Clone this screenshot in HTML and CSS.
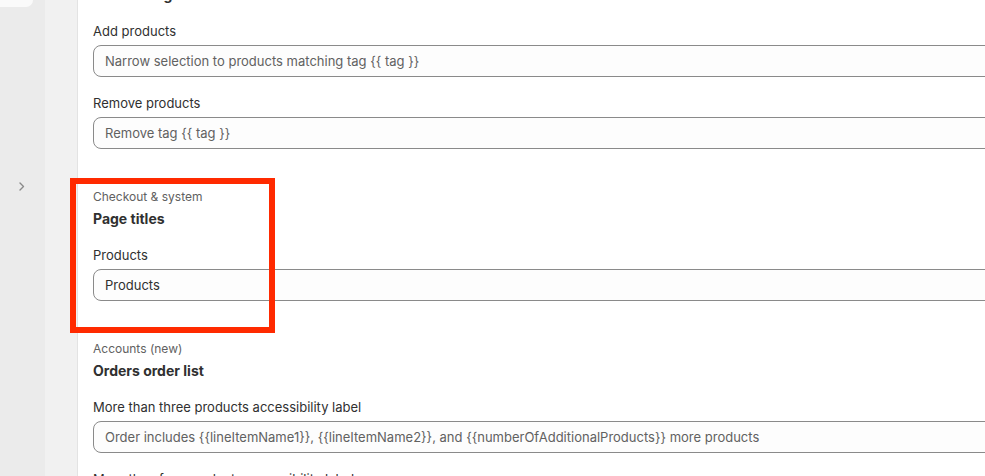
FILE: index.html
```html
<!DOCTYPE html>
<html lang="en">
<head>
<meta charset="utf-8">
<title>Translations</title>
<link rel="stylesheet" href="styles.css">
</head>
<body>
<div class="app">
  <aside class="rail">
    <div class="rail-card"></div>
    <div class="rail-toggle">
      <svg width="6" height="9" viewBox="0 0 6 9" aria-hidden="true"><path d="M1 1l3.5 3.5L1 8" fill="none" stroke="#8a8a8a" stroke-width="1.4" stroke-linecap="round" stroke-linejoin="round"/></svg>
    </div>
  </aside>
  <div class="gutter"></div>
  <main class="content">
    <div class="scroll">
      <section class="section">
        <div class="section-head">
          <h2 class="section-title">Product tags</h2>
        </div>
        <div class="field">
          <label class="field-label">Add products</label>
          <div class="input muted">Narrow selection to products matching tag {{ tag }}</div>
        </div>
        <div class="field">
          <label class="field-label">Remove products</label>
          <div class="input muted">Remove tag {{ tag }}</div>
        </div>
      </section>
      <section class="section">
        <div class="section-head">
          <p class="section-caption">Checkout &amp; system</p>
          <h2 class="section-title">Page titles</h2>
        </div>
        <div class="field">
          <label class="field-label">Products</label>
          <div class="input">Products</div>
        </div>
      </section>
      <section class="section">
        <div class="section-head">
          <p class="section-caption">Accounts (new)</p>
          <h2 class="section-title">Orders order list</h2>
        </div>
        <div class="field">
          <label class="field-label">More than three products accessibility label</label>
          <div class="input muted">Order includes {{lineItemName1}}, {{lineItemName2}}, and {{numberOfAdditionalProducts}} more products</div>
        </div>
        <div class="field">
          <label class="field-label">More than four products accessibility label</label>
          <div class="input muted">Order includes {{lineItemName1}}, {{lineItemName2}}, {{lineItemName3}}, and {{numberOfAdditionalProducts}} more products</div>
        </div>
      </section>
    </div>
  </main>
  <div class="highlight"></div>
</div>
</body>
</html>
```

FILE: styles.css
```css
* { box-sizing: border-box; }
html, body { margin: 0; padding: 0; height: 100%; overflow: hidden; }
body {
  font-family: Inter, "Noto Sans", sans-serif;
  font-size: 13px;
  color: #303030;
  background: #ffffff;
}
.app {
  position: relative;
  display: flex;
  height: 476px;
  width: 1200px;
}
.rail {
  width: 45px;
  flex: none;
  background: #ebebeb;
  display: flex;
  flex-direction: column;
}
.rail-card {
  width: 33px;
  height: 7px;
  background: #fafafa;
  border-bottom-right-radius: 8px;
}
.rail-toggle {
  margin-top: 175px;
  height: 12px;
  display: flex;
  padding-left: 19px;
}
.gutter {
  flex: none;
  width: 33px;
  background: #f1f1f1;
  border-right: 1px solid #e3e3e3;
}
.content {
  flex: 1;
  padding: 0 0 0 15px;
  overflow: hidden;
}
.scroll {
  margin-top: -15px;
  display: flex;
  flex-direction: column;
  gap: 40px;
}
.section {
  display: flex;
  flex-direction: column;
  gap: 16px;
}
.section-head {
  display: flex;
  flex-direction: column;
  gap: 4px;
}
.section-caption {
  margin: 0;
  font-size: 12px;
  line-height: 16px;
  color: #616161;
}
.section-title {
  margin: 0;
  font-size: 14px;
  line-height: 20px;
  font-weight: 650;
  color: #303030;
}
.field {
  display: flex;
  flex-direction: column;
  gap: 4px;
}
.field-label {
  line-height: 20px;
  color: #303030;
}
.input {
  height: 32px;
  border: 1px solid #8a8a8a;
  border-radius: 8px;
  background: #fdfdfd;
  padding: 0 12px 0 11px;
  display: flex;
  align-items: center;
  white-space: nowrap;
  color: #303030;
}
.input.muted { color: #616161; }
.highlight {
  position: absolute;
  left: 70px;
  top: 178px;
  width: 205px;
  height: 155px;
  border: 6px solid #ff2a00;
  pointer-events: none;
}
```
